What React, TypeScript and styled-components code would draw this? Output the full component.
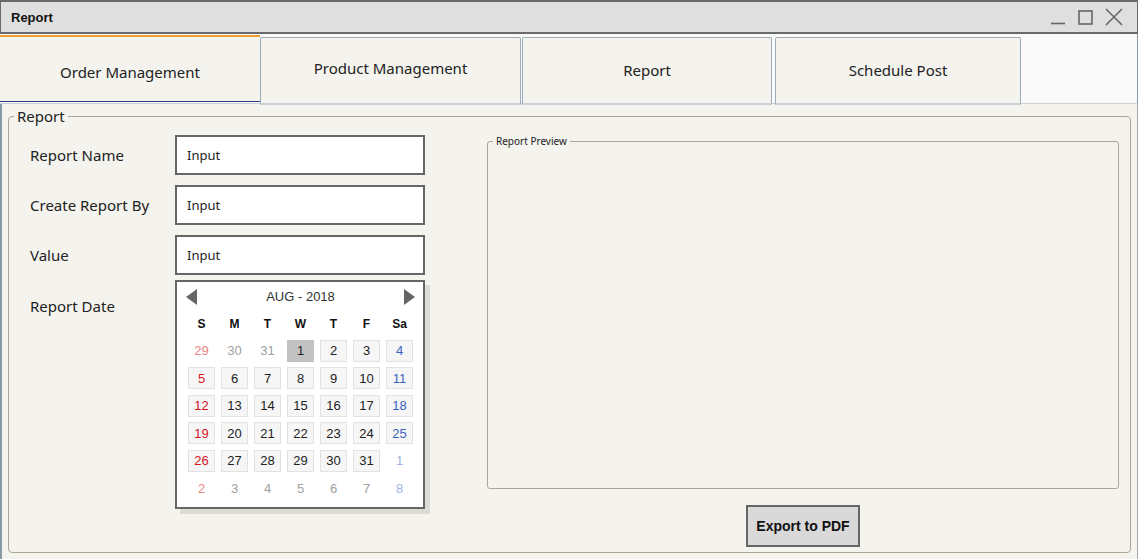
import styled, { createGlobalStyle } from 'styled-components';

const GlobalStyle = createGlobalStyle`
  html, body { margin: 0; padding: 0; background: #f4f3ee; }
  body { font-family: "Noto Sans", "DejaVu Sans", sans-serif; color: #222; }
  * { box-sizing: border-box; }
`;

const Window = styled.div`
  width: 1138px;
  height: 559px;
  display: flex;
  flex-direction: column;
  background: #f4f3ee;
  overflow: hidden;
`;

const TitleBar = styled.div`
  flex-shrink: 0;
  height: 34px;
  display: flex;
  align-items: center;
  justify-content: space-between;
  padding: 0 14px 0 10px;
  background: #dfdfdf;
  border-top: 2px solid #6a6a6a;
  border-left: 1px solid #6a6a6a;
  border-right: 1px solid #6a6a6a;
  border-bottom: 2px solid #6a6a6a;
`;

const Title = styled.span`
  font-family: "Liberation Sans", Arial, sans-serif;
  font-weight: 700;
  font-size: 13px;
  color: #111;
  padding-top: 1px;
`;

const Controls = styled.div`
  display: flex;
  align-items: center;
  gap: 12px;
  color: #666;
`;

const TabBar = styled.div`
  flex-shrink: 0;
  height: 70px;
  display: flex;
  align-items: flex-start;
  background: #fafafa;
  border-right: 1px solid #8a9aa5;
  border-bottom: 1px solid #c8d2d8;
`;

const Tab = styled.div<{ $active?: boolean; $w: number; $gap?: number; $raised?: boolean }>`
  flex-shrink: 0;
  width: ${(p) => p.$w}px;
  height: ${(p) => (p.$active ? 67 : 68)}px;
  margin-top: ${(p) => (p.$active ? 1 : 3)}px;
  margin-right: ${(p) => p.$gap ?? 0}px;
  display: flex;
  align-items: center;
  justify-content: center;
  font-size: 15px;
  color: #222;
  background: #f4f3ee;
  border: ${(p) => (p.$active ? 'none' : '1px solid #9cadb9')};
  border-top: ${(p) => (p.$active ? '2px solid #f0a030' : '1px solid #9cadb9')};
  border-bottom: ${(p) => (p.$active ? '1px solid #2a3a8a' : '2px solid #c8d2d8')};
  border-radius: ${(p) => (p.$active ? '0' : '2px 2px 0 0')};
  padding-top: ${(p) => (p.$active ? 7 : 0)}px;
  padding-bottom: ${(p) => (p.$raised ? 6 : 1)}px;
`;

const Panel = styled.div`
  flex: 1;
  display: flex;
  padding: 2px 6px 6px 6px;
  border-left: 2px solid #8a9aa5;
  border-right: 1px solid #aaa;
`;

const Group = styled.fieldset`
  flex: 1;
  margin: 0;
  padding: 8px 11px 4px 20px;
  border: 1px solid #a9a898;
  border-radius: 4px;
  display: flex;
  gap: 61px;
  min-width: 0;
`;

const Legend = styled.legend<{ $small?: boolean }>`
  padding: 0 3px;
  margin-left: ${(p) => (p.$small ? 5 : -15)}px;
  font-size: ${(p) => (p.$small ? 10 : 15)}px;
  color: #222;
`;

const Form = styled.div`
  width: 397px;
  display: flex;
  flex-direction: column;
  gap: 10px;
  padding-top: 1px;
`;

const Row = styled.div`
  flex-shrink: 0;
  display: flex;
  align-items: flex-start;
`;

const Label = styled.div<{ $top?: boolean }>`
  width: 146px;
  height: 40px;
  display: flex;
  align-items: ${(p) => (p.$top ? 'flex-start' : 'center')};
  padding-left: 1px;
  padding-top: ${(p) => (p.$top ? 11 : 0)}px;
  font-size: 15px;
  color: #222;
`;

const Input = styled.div`
  width: 250px;
  height: 40px;
  display: flex;
  align-items: center;
  padding-left: 10px;
  background: #fff;
  border: 2px solid #666;
  font-size: 13px;
  color: #222;
`;

const Calendar = styled.div`
  flex-shrink: 0;
  width: 250px;
  height: 229px;
  margin-top: -5px;
  background: #fff;
  border: 2px solid #666;
  box-shadow: 5px 5px 0 #dcdbd6;
  font-family: "Liberation Sans", Arial, sans-serif;
  padding: 5px 8px 0 11px;
`;

const CalHeader = styled.div`
  height: 19px;
  margin-left: -2px;
  display: flex;
  align-items: center;
  justify-content: space-between;
  font-size: 13px;
  color: #333;
`;

const Arrow = styled.div<{ $right?: boolean }>`
  width: 0;
  height: 0;
  border-top: 8px solid transparent;
  border-bottom: 8px solid transparent;
  ${(p) => (p.$right ? 'border-left: 11px solid #666;' : 'border-right: 11px solid #666;')}
`;

const Grid = styled.div`
  display: grid;
  grid-template-columns: repeat(7, 27px);
  column-gap: 6px;
  row-gap: 5.5px;
  margin-top: 9px;
`;

const DayName = styled.div`
  height: 18px;
  margin-bottom: 1px;
  display: flex;
  align-items: center;
  justify-content: center;
  font-size: 12px;
  font-weight: 700;
  color: #111;
`;

type Tone = 'sun' | 'sat' | 'norm';

const toneColor = (tone: Tone, other: boolean) => {
  if (tone === 'sun') return other ? '#ec8585' : '#d4141e';
  if (tone === 'sat') return other ? '#9fb2de' : '#3b63c4';
  return other ? '#a0a0a0' : '#222';
};

const Day = styled.div<{ $tone: Tone; $other?: boolean; $sel?: boolean }>`
  height: 22px;
  display: flex;
  align-items: center;
  justify-content: center;
  font-size: 13px;
  color: ${(p) => toneColor(p.$tone, !!p.$other)};
  background: ${(p) => (p.$other ? 'transparent' : p.$sel ? '#c2c2c2' : '#f6f6f6')};
  border: 1px solid ${(p) => (p.$other ? 'transparent' : p.$sel ? '#c2c2c2' : '#e2e2e2')};
`;

const Right = styled.div`
  flex: 1;
  display: flex;
  flex-direction: column;
  align-items: center;
`;

const Preview = styled.fieldset`
  align-self: stretch;
  height: 355px;
  margin: 0;
  padding: 0;
  border: 1px solid #a9a898;
  border-radius: 3px;
  min-width: 0;
`;

const Button = styled.button`
  margin-top: 16px;
  width: 114px;
  height: 42px;
  background: #d9d9d9;
  border: 2px solid #666;
  font-family: "Liberation Sans", Arial, sans-serif;
  font-weight: 700;
  font-size: 14px;
  color: #111;
  padding: 0;
`;

const weeks: { d: number; other?: boolean }[][] = [
  [{ d: 29, other: true }, { d: 30, other: true }, { d: 31, other: true }, { d: 1 }, { d: 2 }, { d: 3 }, { d: 4 }],
  [5, 6, 7, 8, 9, 10, 11].map((d) => ({ d })),
  [12, 13, 14, 15, 16, 17, 18].map((d) => ({ d })),
  [19, 20, 21, 22, 23, 24, 25].map((d) => ({ d })),
  [{ d: 26 }, { d: 27 }, { d: 28 }, { d: 29 }, { d: 30 }, { d: 31 }, { d: 1, other: true }],
  [2, 3, 4, 5, 6, 7, 8].map((d) => ({ d, other: true })),
];

const dayNames = ['S', 'M', 'T', 'W', 'T', 'F', 'Sa'];

export default function App() {
  return (
    <Window>
      <GlobalStyle />
      <TitleBar>
        <Title>Report</Title>
        <Controls>
          <svg width="16" height="16" viewBox="0 0 16 16">
            <path d="M1 14.5h14" stroke="#666" strokeWidth="1.6" />
          </svg>
          <svg width="15" height="15" viewBox="0 0 15 15">
            <rect x="1" y="1" width="13" height="13" fill="none" stroke="#666" strokeWidth="1.6" />
          </svg>
          <svg width="18" height="18" viewBox="0 0 18 18">
            <path d="M1 1L17 17M17 1L1 17" stroke="#666" strokeWidth="1.6" />
          </svg>
        </Controls>
      </TitleBar>
      <TabBar>
        <Tab $active $w={260}>Order Management</Tab>
        <Tab $w={261} $gap={1} $raised>Product Management</Tab>
        <Tab $w={250} $gap={3}>Report</Tab>
        <Tab $w={246}>Schedule Post</Tab>
      </TabBar>
      <Panel>
        <Group>
          <Legend>Report</Legend>
          <Form>
            <Row>
              <Label>Report Name</Label>
              <Input>Input</Input>
            </Row>
            <Row>
              <Label>Create Report By</Label>
              <Input>Input</Input>
            </Row>
            <Row>
              <Label>Value</Label>
              <Input>Input</Input>
            </Row>
            <Row>
              <Label $top>Report Date</Label>
              <Calendar>
                <CalHeader>
                  <Arrow />
                  <span>AUG - 2018</span>
                  <Arrow $right />
                </CalHeader>
                <Grid>
                  {dayNames.map((n, i) => (
                    <DayName key={i}>{n}</DayName>
                  ))}
                  {weeks.flatMap((w, wi) =>
                    w.map((c, ci) => (
                      <Day
                        key={`${wi}-${ci}`}
                        $tone={ci === 0 ? 'sun' : ci === 6 ? 'sat' : 'norm'}
                        $other={c.other}
                        $sel={wi === 0 && c.d === 1}
                      >
                        {c.d}
                      </Day>
                    ))
                  )}
                </Grid>
              </Calendar>
            </Row>
          </Form>
          <Right>
            <Preview>
              <Legend $small>Report Preview</Legend>
            </Preview>
            <Button>Export to PDF</Button>
          </Right>
        </Group>
      </Panel>
    </Window>
  );
}
